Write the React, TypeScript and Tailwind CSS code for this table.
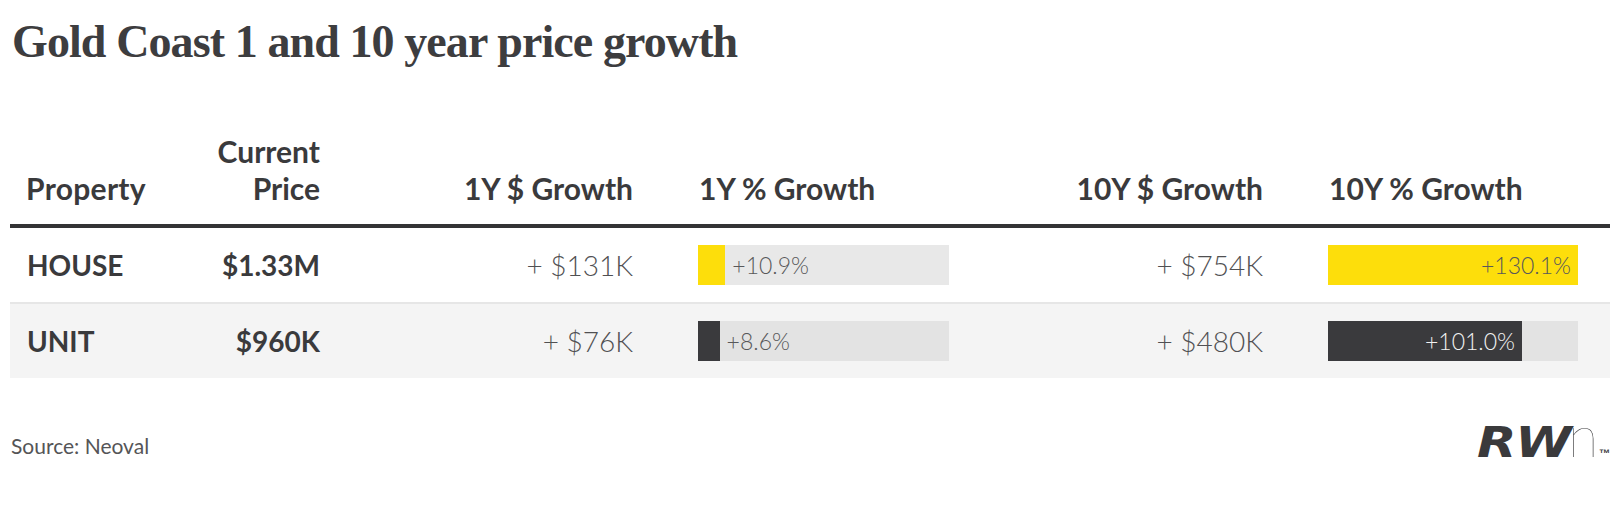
import React from "react";

type BarProps = {
  pct: number;
  label: string;
  width: string;
  track: string;
  fill: string;
  labelClass: string;
  inside: boolean;
};

function Bar({ pct, label, width, track, fill, labelClass, inside }: BarProps) {
  return (
    <div className={`flex h-[40px] items-center ${width} ${track}`}>
      <div
        className={`flex h-full items-center justify-end ${fill}`}
        style={{ width: `${pct}%` }}
      >
        {inside && <span className={`pr-[7px] ${labelClass}`}>{label}</span>}
      </div>
      {!inside && <span className={`pl-[7px] ${labelClass}`}>{label}</span>}
    </div>
  );
}

const cols = "grid grid-cols-[180px_130px_313px_316px_314px_347px]";

export default function App() {
  return (
    <div className="w-[1620px] h-[520px] bg-white pt-[14px] font-[Lato,sans-serif] text-[#3a3a3c]">
      <h1 className="pl-[12px] font-['Liberation_Serif',serif] font-bold text-[46px] leading-[56px] tracking-[-0.9px] text-[#3d3d3f]">
        Gold Coast 1 and 10 year price growth
      </h1>

      <div className="mx-[10px] mt-[63px] w-[1600px]">
        <div
          className={`${cols} items-end pb-[17px] border-b-4 border-[#333335] text-[30px] leading-[37px] font-bold text-[#3a3a3c]`}
        >
          <div className="pl-[16px] tracking-[0.3px]">Property</div>
          <div className="text-right">
            Current
            <br />
            Price
          </div>
          <div className="text-right">1Y $ Growth</div>
          <div className="pl-[66px]">1Y % Growth</div>
          <div className="text-right">10Y $ Growth</div>
          <div className="pl-[66px]">10Y % Growth</div>
        </div>

        <div
          className={`${cols} h-[76px] items-center border-b-2 border-[#e6e6e6] text-[28px] leading-[36px]`}
        >
          <div className="pl-[17px] font-bold">HOUSE</div>
          <div className="text-right font-bold">$1.33M</div>
          <div className="text-right font-light text-[#505052]">+ $131K</div>
          <div className="pl-[65px]">
            <Bar
              pct={10.9}
              label="+10.9%"
              width="w-[251px]"
              track="bg-[#e8e8e8]"
              fill="bg-[#fdde0b]"
              labelClass="text-[23px] font-light text-[#58585a]"
              inside={false}
            />
          </div>
          <div className="text-right font-light text-[#505052]">+ $754K</div>
          <div className="pl-[65px]">
            <Bar
              pct={100}
              label="+130.1%"
              width="w-[250px]"
              track="bg-[#e8e8e8]"
              fill="bg-[#fdde0b]"
              labelClass="text-[23px] font-light text-[#58585a]"
              inside={true}
            />
          </div>
        </div>

        <div
          className={`${cols} h-[74px] items-center bg-[#f4f4f4] text-[28px] leading-[36px]`}
        >
          <div className="pl-[17px] font-bold">UNIT</div>
          <div className="text-right font-bold">$960K</div>
          <div className="text-right font-light text-[#505052]">+ $76K</div>
          <div className="pl-[65px]">
            <Bar
              pct={8.6}
              label="+8.6%"
              width="w-[251px]"
              track="bg-[#e3e3e3]"
              fill="bg-[#3a3a3d]"
              labelClass="text-[23px] font-light text-[#58585a]"
              inside={false}
            />
          </div>
          <div className="text-right font-light text-[#505052]">+ $480K</div>
          <div className="pl-[65px]">
            <Bar
              pct={77.6}
              label="+101.0%"
              width="w-[250px]"
              track="bg-[#e3e3e3]"
              fill="bg-[#3a3a3d]"
              labelClass="text-[23px] font-light text-[#f2f2f2]"
              inside={true}
            />
          </div>
        </div>
      </div>

      <div className="flex items-start justify-between px-[10px]">
        <div className="mt-[54px] pl-[1px] text-[21px] leading-[28px] text-[#555557]">
          Source: Neoval
        </div>
        <div className="mt-[36px] flex items-baseline text-[#3a3a3c]">
          <span className="origin-left scale-x-[1.22] mr-[15px] font-['DejaVu_Sans',sans-serif] font-bold italic text-[42px] leading-[42px] tracking-[-1px]">
            RW
          </span>
          <span className="origin-left scale-x-[0.96] -mr-[1px] font-[Lato,sans-serif] font-thin text-[58px] leading-[42px]">
            n
          </span>
          <span className="font-['Liberation_Sans',sans-serif] font-bold text-[11px] leading-[11px]">
            ™
          </span>
        </div>
      </div>
    </div>
  );
}
